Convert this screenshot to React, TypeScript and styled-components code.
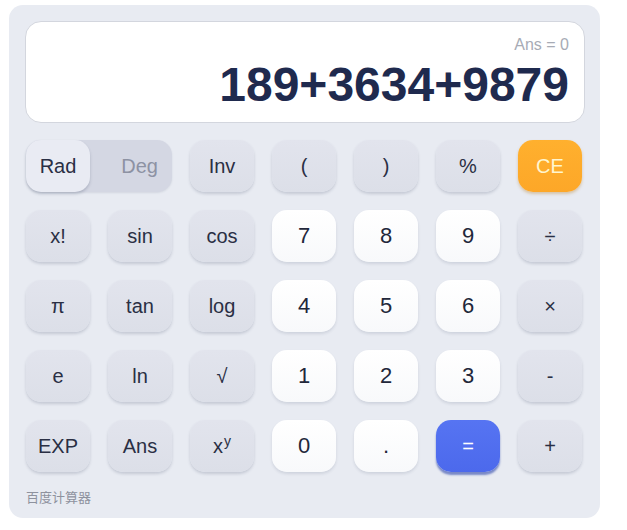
import React from 'react';
import styled, { createGlobalStyle, css } from 'styled-components';

type Kind = 'fn' | 'num' | 'ce' | 'eq';

interface Key {
  label: React.ReactNode;
  kind: Kind;
}

const rows: Key[][] = [
  [
    { label: 'Inv', kind: 'fn' },
    { label: '(', kind: 'fn' },
    { label: ')', kind: 'fn' },
    { label: '%', kind: 'fn' },
    { label: 'CE', kind: 'ce' },
  ],
  [
    { label: 'x!', kind: 'fn' },
    { label: 'sin', kind: 'fn' },
    { label: 'cos', kind: 'fn' },
    { label: '7', kind: 'num' },
    { label: '8', kind: 'num' },
    { label: '9', kind: 'num' },
    { label: '÷', kind: 'fn' },
  ],
  [
    { label: 'π', kind: 'fn' },
    { label: 'tan', kind: 'fn' },
    { label: 'log', kind: 'fn' },
    { label: '4', kind: 'num' },
    { label: '5', kind: 'num' },
    { label: '6', kind: 'num' },
    { label: '×', kind: 'fn' },
  ],
  [
    { label: 'e', kind: 'fn' },
    { label: 'ln', kind: 'fn' },
    { label: '√', kind: 'fn' },
    { label: '1', kind: 'num' },
    { label: '2', kind: 'num' },
    { label: '3', kind: 'num' },
    { label: '-', kind: 'fn' },
  ],
  [
    { label: 'EXP', kind: 'fn' },
    { label: 'Ans', kind: 'fn' },
    {
      label: (
        <>
          x<sup>y</sup>
        </>
      ),
      kind: 'fn',
    },
    { label: '0', kind: 'num' },
    { label: '.', kind: 'num' },
    { label: '=', kind: 'eq' },
    { label: '+', kind: 'fn' },
  ],
];

const Calculator = () => {
  return (
    <Panel>
      <Display>
        <AnsLine>Ans = 0</AnsLine>
        <Expression>189+3634+9879</Expression>
      </Display>
      <Keypad>
        <Toggle>
          <ToggleOn>Rad</ToggleOn>
          <ToggleOff>Deg</ToggleOff>
        </Toggle>
        {rows.flat().map((key, i) => (
          <KeyButton key={i} kind={key.kind}>
            {key.label}
          </KeyButton>
        ))}
      </Keypad>
      <Brand>百度计算器</Brand>
    </Panel>
  );
};

export default function App() {
  return (
    <>
      <GlobalStyle />
      <Calculator />
    </>
  );
}

const GlobalStyle = createGlobalStyle`
  body {
    margin: 0;
    background: #ffffff;
    font-family: 'Liberation Sans', Arial, 'Noto Sans CJK SC', sans-serif;
  }
`;

const Panel = styled.div`
  box-sizing: border-box;
  margin: 5px 0 0 9px;
  width: 591px;
  height: 513px;
  padding: 16px 15px 0 16px;
  background: #e8ebf2;
  border-radius: 14px;
  display: flex;
  flex-direction: column;
`;

const Display = styled.div`
  box-sizing: border-box;
  height: 102px;
  background: #ffffff;
  border: 1px solid #d3d6de;
  border-radius: 16px;
  padding: 14px 15px 0 16px;
  display: flex;
  flex-direction: column;
  align-items: flex-end;
`;

const AnsLine = styled.div`
  font-size: 16px;
  line-height: 18px;
  color: #a7abb5;
`;

const Expression = styled.div`
  margin-top: 4px;
  font-size: 48px;
  line-height: 54px;
  font-weight: bold;
  color: #1f2a4e;
`;

const Keypad = styled.div`
  margin: 17px 0 0 1px;
  display: grid;
  grid-template-columns: repeat(7, 64px);
  grid-auto-rows: 52px;
  gap: 18px;
`;

const Toggle = styled.div`
  grid-column: span 2;
  display: flex;
  align-items: stretch;
  background: #d4d7e3;
  border-radius: 15px;
  box-shadow: 0 1px 2px rgba(60, 70, 100, 0.12);
`;

const ToggleOn = styled.div`
  width: 64px;
  display: flex;
  align-items: center;
  justify-content: center;
  background: #e9ebf3;
  border-radius: 15px;
  box-shadow: 0 2px 3px rgba(60, 70, 100, 0.25);
  font-size: 20px;
  color: #2a2f44;
`;

const ToggleOff = styled.div`
  flex: 1;
  display: flex;
  align-items: center;
  justify-content: flex-end;
  padding-right: 14px;
  font-size: 20px;
  color: #8d92a3;
`;

const kindStyles = {
  fn: css`
    background: linear-gradient(180deg, #e2e4ed 0%, #dcdfe8 100%);
    color: #2a2f44;
  `,
  num: css`
    background: linear-gradient(180deg, #ffffff 0%, #f8f9fb 100%);
    color: #22273a;
    font-size: 22px;
    box-shadow: 0 2px 3px rgba(60, 70, 100, 0.14);
  `,
  ce: css`
    background: linear-gradient(180deg, #ffb02e 0%, #fda728 100%);
    color: #fff6cf;
    box-shadow: 0 2px 3px rgba(180, 120, 30, 0.35);
  `,
  eq: css`
    background: linear-gradient(180deg, #5674f2 0%, #4c69ec 100%);
    color: #ffffff;
    box-shadow: 0 3px 2px rgba(45, 70, 170, 0.6);
  `,
};

const KeyButton = styled.button<{ kind: Kind }>`
  border: none;
  padding: 0;
  border-radius: 15px;
  font-family: 'Liberation Sans', Arial, sans-serif;
  font-size: 20px;
  display: flex;
  align-items: center;
  justify-content: center;
  box-shadow: 0 2px 3px rgba(60, 70, 100, 0.2);
  cursor: pointer;
  ${(p) => kindStyles[p.kind]}

  sup {
    font-size: 14px;
    position: relative;
    top: -5px;
    margin-left: 1px;
  }
`;

const Brand = styled.div`
  margin-top: 15px;
  padding-left: 1px;
  font-size: 13px;
  color: #8e929e;
  font-family: 'Noto Sans CJK SC', sans-serif;
`;
